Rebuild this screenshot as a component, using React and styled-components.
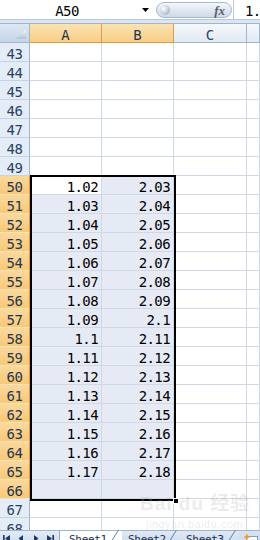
import React from 'react';
import styled, { createGlobalStyle, css } from 'styled-components';

const Global = createGlobalStyle`
  html, body { margin: 0; padding: 0; width: 260px; height: 540px; overflow: hidden; background: #fff; }
  body { font-family: "DejaVu Sans Mono", "Liberation Mono", monospace; }
  * { box-sizing: border-box; }
`;

const MONO = `"DejaVu Sans Mono", "Liberation Mono", monospace`;

const Window = styled.div`
  position: relative;
  width: 260px;
  height: 548px;
  display: flex;
  flex-direction: column;
  background: #fff;
`;

const FormulaBar = styled.div`
  display: flex;
  height: 20px;
  flex: 0 0 20px;
  background: #fff;
  border-bottom: 1px solid #b8c7da;
`;

const NameBox = styled.div`
  width: 134px;
  text-align: center;
  font: 14px/16px ${MONO};
  letter-spacing: -0.6px;
  padding-top: 3px;
  color: #000;
`;

const DropButton = styled.div`
  width: 22px;
  display: flex;
  align-items: center;
  justify-content: center;
`;

const Pill = styled.div`
  width: 76px;
  height: 16px;
  margin-top: 2px;
  border-radius: 8px;
  border: 1px solid #a9b9cd;
  background: linear-gradient(#f4f7fb, #dfe6ef 55%, #cfd9e6);
  display: flex;
  align-items: center;
  justify-content: space-between;
  padding: 0 4px 0 3px;
`;

const Knob = styled.span`
  width: 10px;
  height: 10px;
  border-radius: 50%;
  background: radial-gradient(circle at 35% 35%, #ffffff, #c3ccd8 55%, #8a98aa);
`;

const Fx = styled.span`
  font: italic bold 13px/1 "Liberation Serif", "DejaVu Serif", serif;
  color: #5a5f68;
  padding-right: 2px;
`;

const FormulaInput = styled.div`
  flex: 1;
  border-left: 1px solid #b8c7da;
  margin-left: 1px;
  padding: 3px 0 0 11px;
  font: 14px/16px ${MONO};
  letter-spacing: -0.6px;
  color: #000;
  white-space: nowrap;
  overflow: hidden;
`;

const Band = styled.div`
  height: 3px;
  flex: 0 0 3px;
  background: #dbe5f1;
`;

const Sheet = styled.div`
  flex: 1;
  min-height: 0;
  overflow: hidden;
  display: grid;
  grid-template-columns: 30px 72px 72px 73px 1fr;
  grid-template-rows: 20px repeat(26, 19px);
  align-content: start;
  position: relative;
`;

const placed = css`
  grid-row: ${(p) => p.$r};
  grid-column: ${(p) => p.$c};
`;

const Corner = styled.div`
  grid-column: 1;
  grid-row: 1;
  border-top: 1px solid #9eb6ce;
  border-right: 1px solid #9eb6ce;
  border-bottom: 1px solid #9eb6ce;
  background: linear-gradient(#dde7f4, #c6d5ea);
  display: flex;
  align-items: flex-end;
  justify-content: flex-end;
  padding: 0 3px 3px 0;
`;

const ColHeader = styled.div`
  ${placed};
  border-top: 1px solid #9eb6ce;
  border-right: 1px solid #9eb6ce;
  border-bottom: 1px solid #9eb6ce;
  background: linear-gradient(#f5f8fc, #e2e9f3);
  color: #27415f;
  font: 14px/16px ${MONO};
  text-align: center;
  padding-top: 3px;
  ${(p) =>
    p.$selected &&
    css`
      background: linear-gradient(#fbe3b6, #f7ce84);
      border-right-color: #f29536;
      border-bottom: 1px solid #f29536;
      color: #1f3553;
    `}
`;

const RowHeader = styled.div`
  ${placed};
  border-right: 1px solid #9eb6ce;
  border-bottom: 1px solid #c3d2e5;
  background: #e4ecf7;
  color: #27415f;
  font: 14px/16px ${MONO};
  letter-spacing: -0.4px;
  text-align: center;
  padding-top: 3px;
  ${(p) =>
    p.$selected &&
    css`
      background: linear-gradient(#fad89d, #f7c977);
      border-right-color: #f29536;
      border-bottom-color: #fbe2b3;
      color: #1f3553;
    `}
`;

const Cell = styled.div`
  ${placed};
  border-right: 1px solid #d0d7e5;
  border-bottom: 1px solid #d0d7e5;
  background: ${(p) => (p.$selected && !p.$active ? '#e6eaf5' : '#fff')};
  font: 14px/16px ${MONO};
  letter-spacing: -0.6px;
  color: #000;
  text-align: right;
  padding: 3px 3px 0 0;
  white-space: nowrap;
`;

const Selection = styled.div`
  grid-column: 2 / 4;
  grid-row: 9 / 26;
  margin: -1px -2px -2px 0;
  border: 2px solid #000;
  position: relative;
  pointer-events: none;
  z-index: 2;
`;

const FillHandle = styled.span`
  position: absolute;
  right: -5px;
  bottom: -5px;
  width: 6px;
  height: 6px;
  background: #000;
  border: 1px solid #fff;
`;

const Watermark = styled.div`
  position: absolute;
  left: 140px;
  top: 482px;
  z-index: 3;
  pointer-events: none;
  color: rgba(175, 175, 175, 0.25);
  display: flex;
  flex-direction: column;
  align-items: flex-start;
`;

const WmLogo = styled.div`
  font: bold 19px/20px "Liberation Sans", "Noto Sans CJK SC", sans-serif;
  letter-spacing: 1px;
  padding-top: 12px;
`;

const WmUrl = styled.div`
  font: 11px/12px "Liberation Sans", sans-serif;
  padding: 4px 0 0 6px;
  letter-spacing: 0.5px;
`;

const TabBar = styled.div`
  display: flex;
  height: 18px;
  flex: 0 0 18px;
  border-top: 1px solid #9eb6ce;
  background: linear-gradient(#d7e3f2, #c3d3e9);
`;

const NavGroup = styled.div`
  width: 60px;
  display: flex;
  justify-content: space-between;
  align-items: flex-start;
  padding: 3px 5px 0 3px;
  border-right: 1px solid #8faacb;
  background: linear-gradient(#e3ebf6, #c9d8ec);
`;

const Tab = styled.div`
  position: relative;
  width: ${(p) => p.$w}px;
  background: ${(p) => (p.$active ? '#ffffff' : 'linear-gradient(#dfe8f4, #c8d7eb)')};
  font: 11px/14px ${MONO};
  letter-spacing: -0.3px;
  color: #1b2f4b;
  padding: 2px 0 0 ${(p) => p.$pad}px;
  white-space: nowrap;
  &::after {
    content: '';
    position: absolute;
    top: -1px;
    right: 3px;
    width: 1px;
    height: 22px;
    background: #5f7fa9;
    transform: skewX(-32deg);
    transform-origin: top right;
  }
`;

const InsertTab = styled.div`
  flex: 1;
  display: flex;
  padding: 2px 0 0 4px;
`;

const NavIcon = ({ type }) => (
  <svg width="8" height="9" viewBox="0 0 8 9">
    {type === 'first' && (
      <>
        <rect x="0" y="1" width="1.6" height="7" fill="#1f3a60" />
        <path d="M7 1 L2 4.5 L7 8 Z" fill="#1f3a60" />
      </>
    )}
    {type === 'prev' && <path d="M6 1 L1.5 4.5 L6 8 Z" fill="#1f3a60" />}
    {type === 'next' && <path d="M2 1 L6.5 4.5 L2 8 Z" fill="#1f3a60" />}
    {type === 'last' && (
      <>
        <path d="M1 1 L6 4.5 L1 8 Z" fill="#1f3a60" />
        <rect x="6.4" y="1" width="1.6" height="7" fill="#1f3a60" />
      </>
    )}
  </svg>
);

const InsertIcon = () => (
  <svg width="16" height="12" viewBox="0 0 16 12">
    <rect x="3.5" y="3.5" width="11" height="9" fill="#fff" stroke="#8a9bb2" />
    <path d="M4 0.5 L5 3 L7.5 4 L5 5 L4 7.5 L3 5 L0.5 4 L3 3 Z" fill="#f29a1e" />
  </svg>
);

const CornerTriangle = () => (
  <svg width="11" height="10" viewBox="0 0 11 10">
    <defs>
      <linearGradient id="ct" x1="0" y1="0" x2="0" y2="1">
        <stop offset="0" stopColor="#f7f9fc" />
        <stop offset="1" stopColor="#b4c2d4" />
      </linearGradient>
    </defs>
    <path d="M0 10 L11 10 L11 0 Z" fill="url(#ct)" />
  </svg>
);

const firstRow = 43;
const rowCount = 26;
const colA = {};
const colB = {};
for (let i = 0; i < 16; i++) {
  const r = 50 + i;
  colA[r] = (1.02 + i * 0.01).toFixed(2).replace(/0$/, '');
  colB[r] = (2.03 + i * 0.01).toFixed(2).replace(/0$/, '');
}

const cols = ['A', 'B', 'C', ''];

export default function App() {
  const rows = Array.from({ length: rowCount }, (_, i) => firstRow + i);
  const inSel = (r, c) => r >= 50 && r <= 66 && (c === 0 || c === 1);
  return (
    <Window>
      <Global />
      <FormulaBar>
        <NameBox>A50</NameBox>
        <DropButton>
          <svg width="7" height="4" viewBox="0 0 7 4">
            <path d="M0 0 L7 0 L3.5 4 Z" fill="#000" />
          </svg>
        </DropButton>
        <Pill>
          <Knob />
          <Fx>fx</Fx>
        </Pill>
        <FormulaInput>1.02</FormulaInput>
      </FormulaBar>
      <Band />
      <Sheet>
        <Corner>
          <CornerTriangle />
        </Corner>
        {cols.map((c, i) => (
          <ColHeader key={'h' + i} $r={1} $c={i + 2} $selected={i < 2}>
            {c}
          </ColHeader>
        ))}
        {rows.map((r, ri) => (
          <React.Fragment key={r}>
            <RowHeader $r={ri + 2} $c={1} $selected={r >= 50 && r <= 66}>
              {r}
            </RowHeader>
            {cols.map((_, c) => (
              <Cell
                key={c}
                $r={ri + 2}
                $c={c + 2}
                $selected={inSel(r, c)}
                $active={r === 50 && c === 0}
              >
                {c === 0 ? colA[r] : c === 1 ? colB[r] : ''}
              </Cell>
            ))}
          </React.Fragment>
        ))}
        <Selection>
          <FillHandle />
        </Selection>
      </Sheet>
      <Watermark>
        <WmLogo>Bai du 经验</WmLogo>
        <WmUrl>jingyan.baidu.com</WmUrl>
      </Watermark>
      <TabBar>
        <NavGroup>
          <NavIcon type="first" />
          <NavIcon type="prev" />
          <NavIcon type="next" />
          <NavIcon type="last" />
        </NavGroup>
        <Tab $active $w={62} $pad={9}>Sheet1</Tab>
        <Tab $w={58} $pad={6}>Sheet2</Tab>
        <Tab $w={59} $pad={6}>Sheet3</Tab>
        <InsertTab>
          <InsertIcon />
        </InsertTab>
      </TabBar>
    </Window>
  );
}
